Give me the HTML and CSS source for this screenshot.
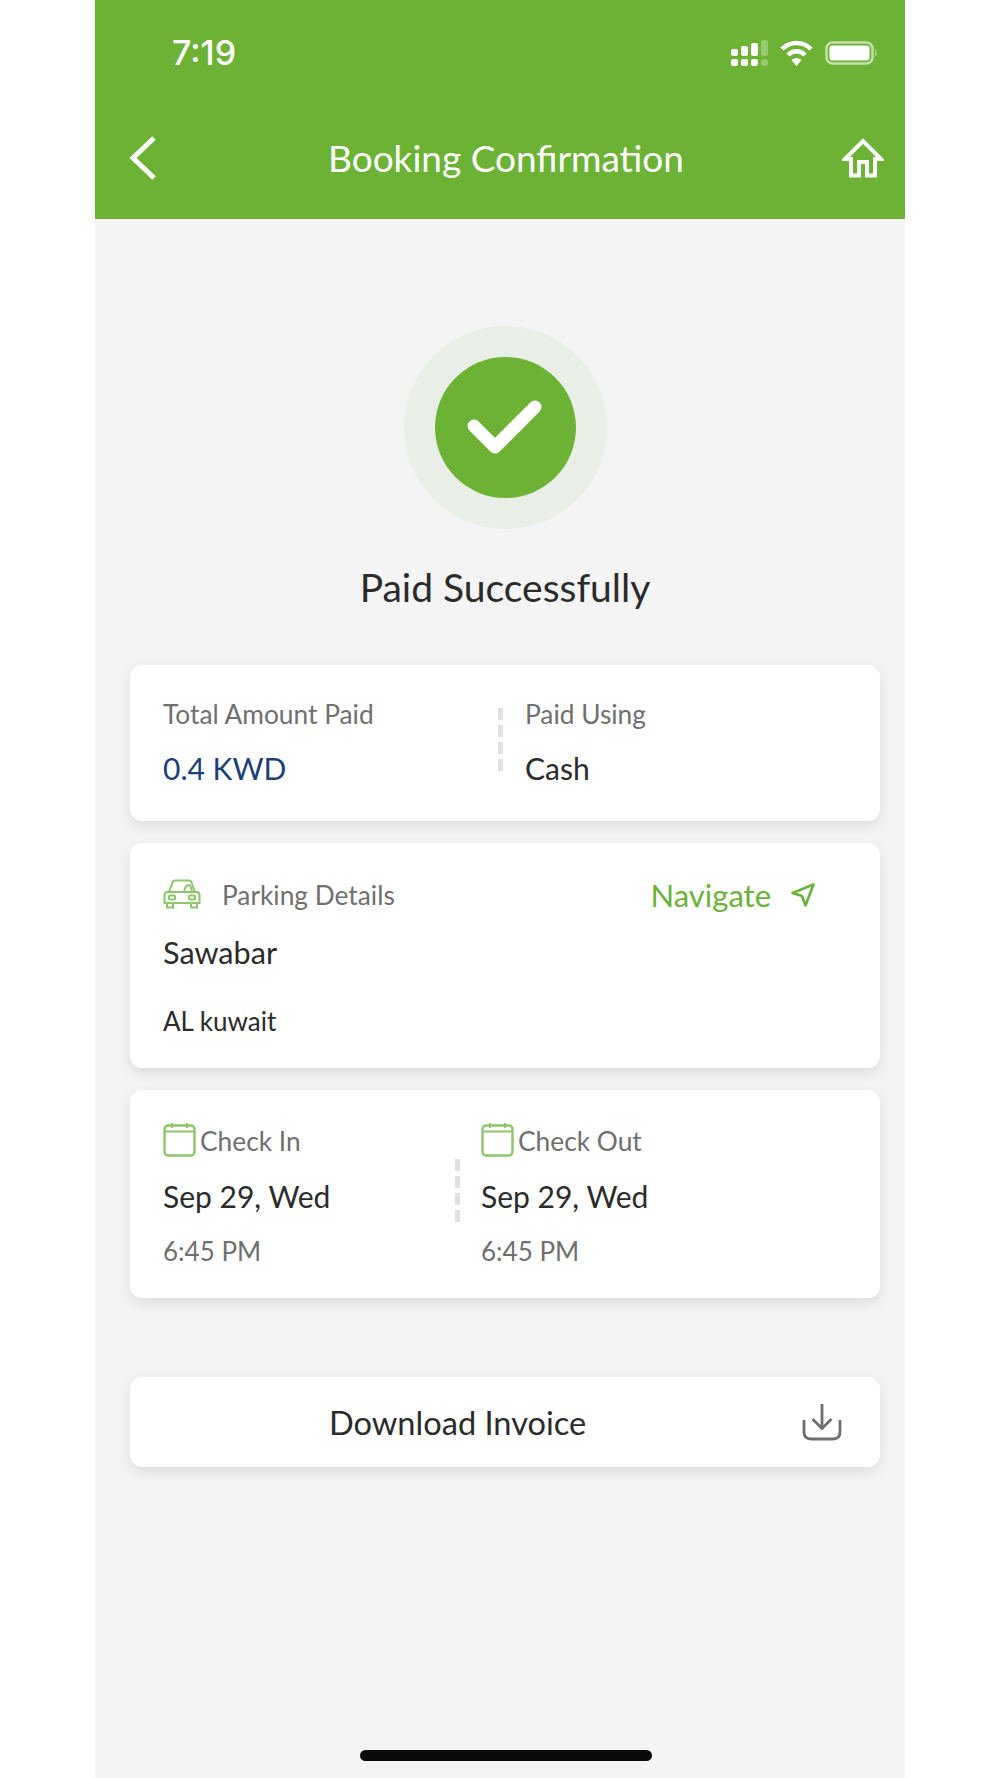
FILE: index.html
```html
<!DOCTYPE html>
<html lang="en">

<head>
    <meta charset="UTF-8">
    <title>Booking Confirmation</title>
    <link rel="stylesheet" href="styles.css">
</head>

<body>
    <div class="phone">
        <div class="top-bar">
            <div class="status-bar">
                <span class="clock">7:19</span>
                <div class="status-icons">
                    <svg width="37" height="26" viewBox="0 0 37 26" fill="#fff">
                        <rect x="0" y="9" width="7" height="7" rx="2" />
                        <rect x="10" y="6" width="7" height="10" rx="2" />
                        <rect x="20" y="3" width="7" height="13" rx="2" />
                        <rect x="30" y="0" width="7" height="16" rx="2" opacity=".3" />
                        <rect x="0" y="19" width="7" height="7" rx="2" />
                        <rect x="10" y="19" width="7" height="7" rx="2" />
                        <rect x="20" y="19" width="7" height="7" rx="2" />
                        <rect x="30" y="19" width="7" height="7" rx="3" opacity=".3" />
                    </svg>
                    <svg width="33" height="26" viewBox="0 0 33 26" fill="none" stroke="#fff" stroke-width="4.5">
                        <path d="M2 9 C10 1 23 1 31 9" />
                        <path d="M8 15 C13 10 20 10 25 15" />
                        <path d="M16.5 26 L11.5 20 C14 17.5 19 17.5 21.5 20 Z" fill="#fff" stroke="none" />
                    </svg>
                    <svg width="52" height="24" viewBox="0 0 52 24">
                        <rect x="1.500" y="1.500" width="46" height="21" rx="6" fill="none" stroke="#fff" stroke-opacity=".6" stroke-width="2.500" />
                        <rect x="4.500" y="4.500" width="40" height="15" rx="3" fill="#fff" />
                        <path d="M50 8 C52 9 52 15 50 16 Z" fill="#fff" fill-opacity=".5" />
                    </svg>
                </div>
            </div>
            <div class="nav-bar">
                <svg class="back-icon" width="28" height="44" viewBox="0 0 28 44" fill="none" stroke="#fff" stroke-width="5">
                    <path d="M25 2 L4 22 L25 42" />
                </svg>
                <h1>Booking Confirmation</h1>
                <svg class="home-icon" width="42" height="40" viewBox="0 0 42 40" fill="none" stroke="#fff" stroke-width="4">
                    <path d="M3 21 L21 3 L39 21 H33 V37.5 H25 V24 H17 V37.5 H9 V21 Z" />
                </svg>
            </div>
        </div>

        <div class="success">
            <div class="check-ring">
                <div class="check-circle">
                    <svg width="141" height="141" viewBox="0 0 141 141" fill="none" stroke="#fff" stroke-width="13" stroke-linecap="round" stroke-linejoin="round">
                        <path d="M39 69 L60 90 L100 50" />
                    </svg>
                </div>
            </div>
            <p class="success-text">Paid Successfully</p>
        </div>

        <div class="cards">
            <div class="card card-paid">
                <div class="paid-col">
                    <p class="label">Total Amount Paid</p>
                    <p class="amount">0.4 KWD</p>
                </div>
                <div class="dash"></div>
                <div class="paid-col paid-using">
                    <p class="label">Paid Using</p>
                    <p class="value">Cash</p>
                </div>
            </div>

            <div class="card card-parking">
                <div class="parking-head">
                    <svg class="car-icon" width="38" height="30" viewBox="0 0 38 30" fill="none" stroke="#8cc56a" stroke-width="2">
                        <path d="M6 13 L9.500 3.500 Q10 1.500 12 1.500 H26 Q28 1.500 28.500 3.500 L32 13" />
                        <path d="M1.500 16 Q1.500 13 5 13 H33 Q36.500 13 36.500 16 V24 H1.500 Z" />
                        <path d="M4 24 V28.500 H10 V24 M28 24 V28.500 H34 V24" />
                        <path d="M21 13 Q22 6 26 6 Q28 6 29 13" />
                        <rect x="6" y="16.500" width="6" height="4" rx="1" />
                        <rect x="26" y="16.500" width="6" height="4" rx="1" />
                    </svg>
                    <span class="label">Parking Details</span>
                    <div class="navigate">
                        <span>Navigate</span>
                        <svg width="24" height="24" viewBox="0 0 24 24" fill="none" stroke="#6ab23a" stroke-width="2.600" stroke-linejoin="round">
                            <path d="M22.500 1.500 L1.500 10 L11 13 L14.500 22.500 Z" />
                        </svg>
                    </div>
                </div>
                <p class="value parking-name">Sawabar</p>
                <p class="parking-place">AL kuwait</p>
            </div>

            <div class="card card-dates">
                <div class="date-col date-in">
                    <div class="date-head">
                        <svg width="33" height="35" viewBox="0 0 33 35" fill="none" stroke="#8cc56a" stroke-width="2.400">
                            <rect x="1.500" y="3.500" width="30" height="30" rx="3.500" />
                            <path d="M1.500 9.500 H31.500 M9 1 V6 M24 1 V6" stroke-width="1.800" />
                        </svg>
                        <span class="label">Check In</span>
                    </div>
                    <p class="value">Sep 29, Wed</p>
                    <p class="time">6:45 PM</p>
                </div>
                <div class="dash"></div>
                <div class="date-col date-out">
                    <div class="date-head">
                        <svg width="33" height="35" viewBox="0 0 33 35" fill="none" stroke="#8cc56a" stroke-width="2.400">
                            <rect x="1.500" y="3.500" width="30" height="30" rx="3.500" />
                            <path d="M1.500 9.500 H31.500 M9 1 V6 M24 1 V6" stroke-width="1.800" />
                        </svg>
                        <span class="label">Check Out</span>
                    </div>
                    <p class="value">Sep 29, Wed</p>
                    <p class="time">6:45 PM</p>
                </div>
            </div>
        </div>

        <div class="card card-download">
            <span class="download-text">Download Invoice</span>
            <svg width="40" height="38" viewBox="0 0 40 38" fill="none" stroke="#6f6f6f" stroke-width="2.800">
                <path d="M20 1 V25 M10.500 16 L20 25.500 L29.500 16" />
                <path d="M2 17 V29 Q2 36 9 36 H31 Q38 36 38 29 V17" />
            </svg>
        </div>

        <div class="home-bar"></div>
    </div>
</body>

</html>
```

FILE: styles.css
```css
body {
    margin: 0;
    background-color: #fff;
    font-family: Lato, "Open Sans", sans-serif;
    color: #2b2b2b;
}

p,
h1 {
    margin: 0;
    font-weight: 400;
}

.phone {
    position: relative;
    width: 810px;
    height: 1778px;
    margin: 0 auto;
    background-color: #f4f4f4;
    overflow: hidden;
}

.top-bar {
    height: 219px;
    background-color: #6cb335;
    color: #fff;
}

.status-bar {
    display: flex;
    align-items: center;
    justify-content: space-between;
    height: 105px;
    padding: 0 28px 0 77px;
}

.clock {
    font-family: Inter, Roboto, sans-serif;
    font-size: 34px;
    font-weight: 500;
}

.status-icons {
    display: flex;
    align-items: center;
    gap: 12px;
}

.nav-bar {
    display: flex;
    align-items: center;
    justify-content: space-between;
    height: 105px;
    padding: 0 21px 0 34px;
}

.nav-bar h1 {
    font-size: 37px;
    margin-left: 13px;
}

.success {
    display: flex;
    flex-direction: column;
    align-items: center;
    padding: 107px 0 0 10px;
}

.check-ring {
    display: flex;
    align-items: center;
    justify-content: center;
    width: 203px;
    height: 203px;
    border-radius: 50%;
    background-color: #e9eee6;
}

.check-circle {
    width: 141px;
    height: 141px;
    border-radius: 50%;
    background-color: #6cb335;
}

.check-circle svg {
    display: block;
}

.success-text {
    margin-top: 35px;
    font-size: 39px;
    line-height: 46px;
}

.cards {
    display: flex;
    flex-direction: column;
    gap: 22px;
    margin-top: 55px;
}

.card {
    box-sizing: border-box;
    width: 750px;
    margin-left: 35px;
    background-color: #fff;
    border-radius: 12px;
    box-shadow: 0 5px 14px rgba(0, 0, 0, 0.1);
}

.label {
    font-size: 26.3px;
    line-height: 32px;
    color: #6f6f6f;
}

.value {
    font-size: 30.6px;
    line-height: 38px;
}

.dash {
    width: 5px;
    height: 64px;
    background-image: repeating-linear-gradient(#e0e0e0 0, #e0e0e0 12px, transparent 12px, transparent 17px);
}

.card-paid {
    display: flex;
    height: 156px;
    padding: 33px 0 0 33px;
}

.card-paid .dash {
    margin: 10px 0 0 1px;
}

.paid-col {
    width: 334px;
}

.paid-using {
    width: auto;
    padding-left: 22px;
}

.amount {
    margin-top: 19px;
    font-size: 30px;
    line-height: 38px;
    color: #1c3f78;
}

.paid-col .value {
    margin-top: 19px;
    font-size: 30px;
}

.card-parking {
    height: 225px;
    padding: 36px 33px 0;
}

.parking-head {
    display: flex;
    align-items: center;
    height: 32px;
}

.car-icon {
    margin: 0 21px 2px 0;
}

.navigate {
    display: flex;
    align-items: center;
    gap: 20px;
    margin-left: auto;
    margin-right: 32px;
    font-size: 31px;
    color: #6ab23a;
}

.parking-name {
    margin-top: 23px;
}

.parking-place {
    margin-top: 33px;
    font-size: 26px;
    line-height: 32px;
}

.card-dates {
    display: flex;
    height: 208px;
    padding: 33px 0 0 33px;
}

.date-col {
    width: 292px;
}

.date-out {
    width: auto;
    padding-left: 21px;
}

.card-dates .dash {
    margin-top: 36px;
}

.date-head {
    display: flex;
    align-items: center;
    gap: 4px;
    height: 36px;
}

.date-head svg {
    margin-bottom: 4px;
}

.date-col .value {
    margin-top: 18px;
    font-size: 30px;
}

.time {
    margin-top: 20px;
    font-size: 26px;
    line-height: 32px;
    color: #6f6f6f;
}

.card-download {
    display: flex;
    align-items: center;
    height: 90px;
    margin-top: 79px;
    padding: 0 38px 0 199px;
}

.download-text {
    font-size: 32.6px;
}

.card-download svg {
    margin-left: auto;
}

.home-bar {
    position: absolute;
    left: 265px;
    bottom: 17px;
    width: 292px;
    height: 11px;
    border-radius: 6px;
    background-color: #0b0b0b;
}
```
